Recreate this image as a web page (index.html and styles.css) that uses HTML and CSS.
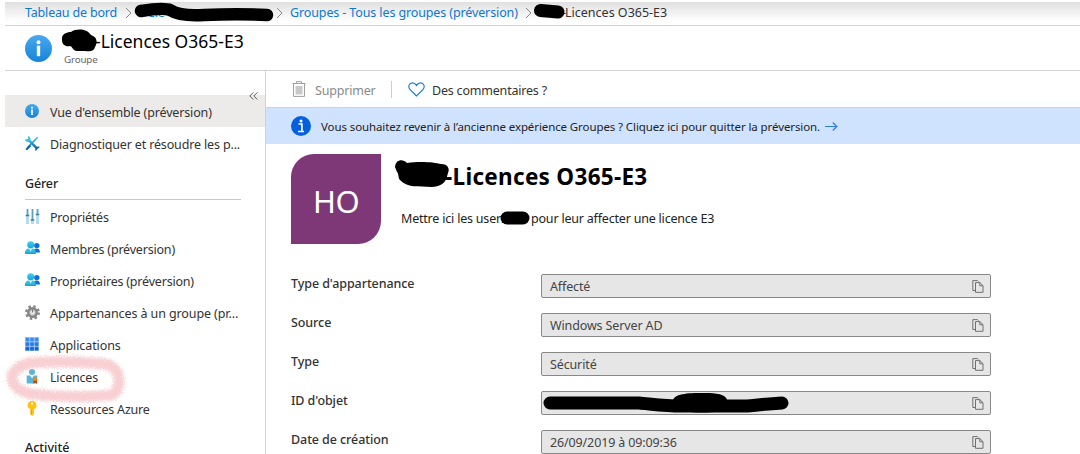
FILE: index.html
```html
<!DOCTYPE html>
<html lang="fr">
<head>
<meta charset="utf-8">
<title>Licences O365-E3</title>
<link rel="stylesheet" href="styles.css">
</head>
<body>
<svg class="defs" width="0" height="0">
  <defs>
    <linearGradient id="info" x1="0" y1="0" x2="0" y2="1"><stop offset="0" stop-color="#49a9ee"/><stop offset="1" stop-color="#1683da"/></linearGradient>
    <linearGradient id="person" x1="0" y1="0" x2="0" y2="1"><stop offset="0" stop-color="#3fd0ee"/><stop offset="1" stop-color="#1ba3d6"/></linearGradient>
    <linearGradient id="tile" x1="0" y1="0" x2="0" y2="1"><stop offset="0" stop-color="#4a93ef"/><stop offset="1" stop-color="#0f62d2"/></linearGradient>
    <linearGradient id="tool" x1="0" y1="0" x2="0" y2="1"><stop offset="0" stop-color="#2fc3ea"/><stop offset="1" stop-color="#0c64a8"/></linearGradient>
  </defs>
  <symbol id="i-info" viewBox="0 0 26 26"><circle cx="13" cy="13" r="13" fill="url(#info)"/><circle cx="13" cy="6.900" r="1.900" fill="#fff"/><path d="M11.400 10.200h3.200v10.200h-3.200z" fill="#fff"/></symbol>
  <symbol id="i-people" viewBox="0 0 16 14"><circle cx="11.800" cy="4.600" r="2.700" fill="#0f6fdc"/><path d="M8.800 11.500V9.800C9 8.300 10 7.500 11.600 7.500c2.200 0 3.300 1.200 3.400 4z" fill="#0f6fdc"/><circle cx="5.700" cy="3.800" r="3.500" fill="url(#person)"/><path d="M0 13v-1.800C.2 8.600 2 7.300 5.500 7.300s5.400 1.600 5.500 5.700z" fill="url(#person)"/><path d="M4.200 7.400h2.800l-1.400 3.400z" fill="#e3fbff"/></symbol>
  <symbol id="i-copy" viewBox="0 0 12 13"><path d="M3.300 10.500H.8V.6h4.700l1 1M3.500 2.600h4.400L11 5.700v6.600H3.500zM7.800 2.700v3.100H11" fill="none" stroke="#707070"/></symbol>
  <symbol id="i-chev" viewBox="0 0 7 12"><path d="M1 1l5 5-5 5" fill="none" stroke="#888"/></symbol>
</svg>

<div class="page">
  <nav class="crumbs">
    <a class="crumb c-home">Tableau de bord</a>
    <svg class="chev" width="7" height="12"><use href="#i-chev"/></svg>
    <a class="crumb c-org">Cle</a>
    <svg class="chev" width="7" height="12"><use href="#i-chev"/></svg>
    <a class="crumb c-groups">Groupes - Tous les groupes (préversion)</a>
    <svg class="chev" width="7" height="12"><use href="#i-chev"/></svg>
    <span class="crumb c-current"><span class="dash">-</span>Licences O365-E3</span>
  </nav>

  <header class="blade">
    <svg width="27" height="27"><use href="#i-info"/></svg>
    <div class="blade-text">
      <h1 class="blade-title">-Licences O365-E3</h1>
      <div class="blade-sub">Groupe</div>
    </div>
  </header>

  <div class="body">
    <aside class="side">
      <div class="collapse"><svg width="9" height="8" viewBox="0 0 9 8"><path d="M4.300.5L.8 4l3.500 3.500M8.300.5L4.800 4l3.500 3.500" fill="none" stroke="#555"/></svg></div>
      <a class="item active"><svg width="14" height="14"><use href="#i-info"/></svg><span class="l-over">Vue d'ensemble (préversion)</span></a>
      <a class="item"><svg width="15" height="15" viewBox="0 0 15 15"><path d="M12.700 1.300L3.500 10.500 1.200 13.700" stroke="url(#tool)" stroke-width="1.600" fill="none"/><path d="M2.600 3l9.600 9.600" stroke="url(#tool)" stroke-width="2.400"/><path d="M4.900 9L1.200 12.600l1.200 1.300L6.100 10.300z" fill="#0c68b0"/><path d="M3.200.7A3.300 3.300 0 0 1 4 5 3.300 3.300 0 0 1 .6 3.500" fill="none" stroke="#2fc3ea" stroke-width="1.800"/><path d="M14.300 11.500a2.600 2.600 0 0 0-3.300 3" fill="none" stroke="#17669f" stroke-width="1.700"/></svg><span class="l-diag">Diagnostiquer et résoudre les p...</span></a>
      <h2 class="section">Gérer</h2>
      <a class="item"><svg width="15" height="15" viewBox="0 0 15 15"><path d="M2.500 0v15M7.500 0v15M12.500 0v15" stroke="#b4dcec" stroke-width="3"/><path d="M2.500 0v6M7.500 0v11M12.500 0v5" stroke="#5f9fba"/><path d="M.7 6.500h3.600M5.700 11h3.600M10.700 5.500h3.600" stroke="#3e7c9a" stroke-width="1.300"/></svg><span>Propriétés</span></a>
      <a class="item"><svg width="16" height="14"><use href="#i-people"/></svg><span class="l-mem">Membres (préversion)</span></a>
      <a class="item"><svg width="16" height="14"><use href="#i-people"/></svg><span class="l-mem">Propriétaires (préversion)</span></a>
      <a class="item"><svg width="15" height="15" viewBox="0 0 15 15"><circle cx="7.500" cy="7.500" r="6.300" fill="none" stroke="#858585" stroke-width="2.200" stroke-dasharray="2.500 2.450"/><circle cx="7.500" cy="7.500" r="4.300" fill="#c4c4c4" stroke="#858585" stroke-width="2.400"/><circle cx="7.500" cy="7.500" r="2" fill="#eee"/><path d="M7.500 4.500v3" stroke="#777" stroke-width="1.200"/></svg><span class="l-app">Appartenances à un groupe (pr...</span></a>
      <a class="item"><svg width="14" height="14" viewBox="0 0 14 14"><path d="M.3.300h13.400v13.400H.3z" fill="url(#tile)"/><path d="M4.700 0v14M9.300 0v14M0 4.700h14M0 9.300h14" stroke="#b9d8fb" stroke-width=".8"/></svg><span class="l-apps">Applications</span></a>
      <a class="item"><svg width="14" height="15" viewBox="0 0 14 15"><circle cx="7" cy="3" r="3" fill="#59b4d9"/><path d="M1.700 6.500H5l2 2.500 2-2.500h3.300V14.500H1.700z" fill="#59b4d9"/><path d="M5.500 6.500h3L7 9z" fill="#fff"/><path d="M8.400 11H12v3.700l-1.800-1-1.800 1z" fill="#a84d1b"/><circle cx="10.200" cy="9.900" r="2.100" fill="#e88b1a"/></svg><span>Licences</span></a>
      <a class="item"><svg width="14" height="15" viewBox="0 0 14 15"><path fill-rule="evenodd" d="M7 0C10 0 11.500 2 11.500 4.300 11.500 6.200 10.500 7.500 8.900 8.200V13l-1.700 2L5.500 13.500V8.200C3.700 7.500 2.500 6.200 2.500 4.300 2.500 2 4.200 0 7 0zM7 1.500a1.100 1.100 0 1 0 .01 0z" fill="#ffc20e"/><path d="M6.200 8.500v5" stroke="#e79500"/></svg><span>Ressources Azure</span></a>
      <h2 class="section last">Activité</h2>
    </aside>

    <main class="main">
      <div class="toolbar">
        <svg width="14" height="16" viewBox="0 0 14 16"><path d="M.5 2.500h13M4.500 2V.6h5V2M1.500 3v12.400h11V3" fill="none" stroke="#a0a0a0"/><path d="M3.500 5h7v8.500h-7z" fill="#c8c8c8"/></svg>
        <span class="t-del">Supprimer</span>
        <i class="sep"></i>
        <svg width="17" height="15" viewBox="0 0 17 15"><path d="M8.500 14L1.900 7.400C-.3 4.700 1.100.8 4.400.8c1.800 0 3.100.9 4.100 2.600C9.500 1.700 10.800.8 12.600.8c3.300 0 4.700 3.900 2.500 6.600z" fill="none" stroke="#1882d8" stroke-width="1.200"/></svg>
        <span class="t-com">Des commentaires ?</span>
      </div>
      <div class="banner">
        <svg width="20" height="20" viewBox="0 0 20 20"><circle cx="10" cy="10" r="10" fill="#0560dd"/><circle cx="10" cy="5" r="1.500" fill="#fff"/><path d="M7.500 8h3.400v7M7 15.500h6" fill="none" stroke="#fff" stroke-width="1.700"/></svg>
        <span class="banner-text">Vous souhaitez revenir à l’ancienne expérience Groupes ? Cliquez ici pour quitter la préversion.</span>
        <svg width="13" height="9" viewBox="0 0 13 9"><path d="M0 4.500h12M7.800.5l4 4-4 4" fill="none" stroke="#2f7cf0" stroke-width="1.200"/></svg>
      </div>
      <section class="profile">
        <div class="avatar">HO</div>
        <div class="profile-text">
          <h2 class="name">-Licences O365-E3</h2>
          <p class="desc"><span class="d1">Mettre ici les users</span><span class="d2">pour leur affecter une licence E3</span></p>
        </div>
      </section>
      <dl class="props">
        <dt>Type d'appartenance</dt><dd><span>Affecté</span><svg width="12" height="13"><use href="#i-copy"/></svg></dd>
        <dt>Source</dt><dd><span>Windows Server AD</span><svg width="12" height="13"><use href="#i-copy"/></svg></dd>
        <dt>Type</dt><dd><span>Sécurité</span><svg width="12" height="13"><use href="#i-copy"/></svg></dd>
        <dt>ID d'objet</dt><dd><span></span><svg width="12" height="13"><use href="#i-copy"/></svg></dd>
        <dt>Date de création</dt><dd><span>26/09/2019 à 09:09:36</span><svg width="12" height="13"><use href="#i-copy"/></svg></dd>
      </dl>
    </main>
  </div>

  <svg class="marks" width="1080" height="454" viewBox="0 0 1080 454">
    <defs><filter id="chalk" x="-15%" y="-40%" width="130%" height="180%"><feTurbulence type="fractalNoise" baseFrequency=".9" numOctaves="2" seed="4" result="n"/><feGaussianBlur in="SourceGraphic" stdDeviation="1.500" result="b"/><feDisplacementMap in="b" in2="n" scale="7" xChannelSelector="R" yChannelSelector="G"/></filter></defs>
    <g fill="none" stroke="#000" stroke-linecap="round" stroke-linejoin="round">
      <path d="M140 11C152 9 164 8 169 10C177 15 188 16 203 15C225 14 247 14 266 15" stroke-width="12.500"/>
      <path d="M539.500 10.500L557 12" stroke-width="13"/>
      <path d="M506 218h16" stroke-width="13"/>
      <path d="M549 403H638C650 404 665 406 680 406H746C757 405 765 404 781 403" stroke-width="13"/>
    </g>
    <path d="M61 40C60 34 66 32 70 32C76 28 86 29 90 35C96 37 97 42 94 47C93 51 90 52 84 51H76C72 51 71 46 69 46C65 47 61 45 61 40z"/>
    <path d="M394 167C395 159 402 159 406 163C418 161 433 162 440 164C447 164 449 169 447 173C445 181 443 186 431 187C417 186 406 188 399 180C397 178 398 174 396 172z"/>
    <path d="M672 400C674 393 690 393 704 393C715 393 725 394 726 400V408C720 414 692 413 680 411z"/>
    <path class="ring" filter="url(#chalk)" d="M30 363C55 361 83 362 104 364C122 367 121 392 110 395C88 397 57 397 31 394C5 389 4 368 30 363z"/>
  </svg>
</div>
</body>
</html>
```
FILE: styles.css
```css
* { box-sizing: border-box; }
body { margin: 0; background: #fff; color: #333; font-family: "Noto Sans", sans-serif; font-size: 12.5px; overflow: hidden; }
h1, h2, p, dl, dd { margin: 0; }
svg { display: block; flex: none; }
.defs { position: absolute; }
.page { position: relative; height: 454px; padding: 2px 0 0 5px; overflow: hidden; white-space: nowrap; }

.crumbs { display: flex; align-items: center; height: 24px; padding: 0 0 2px 20px; background: linear-gradient(#e0e0e0, #fff 85%); border-bottom: 1px solid #d2d2d2; letter-spacing: -.18px; color: #0f78d0; }
.crumb { flex: none; line-height: 18px; }
.c-home { width: 100px; }
.c-org { width: 129px; margin-left: 15px; }
.c-groups { width: 235px; margin-left: 7px; letter-spacing: -.12px; }
.c-current { margin-left: 29px; color: #333; letter-spacing: 0; }
.dash { display: inline-block; transform: translateX(1px); }

.blade { display: flex; height: 45px; padding: 9px 0 0 20px; border-bottom: 1px solid #d2d2d2; }
.blade-text { padding-left: 12px; margin-top: -6px; }
.blade-title { margin-left: 31px; color: #000; font-size: 17.5px; font-weight: 400; line-height: 25px; letter-spacing: 0; }
.blade-sub { font-size: 9.8px; line-height: 12px; color: #666; letter-spacing: -.15px; }

.body { display: flex; height: 383px; }
.side { width: 261px; padding-top: 24px; border-right: 1px solid #d2d2d2; position: relative; }
.collapse { position: absolute; right: 7px; top: 21px; }
.item { display: flex; align-items: center; height: 32px; padding-left: 20px; letter-spacing: -.2px; color: #333; }
.item span { margin-left: auto; width: 215px; padding-top: 2px; }
.item .l-over, .item .l-diag { letter-spacing: -.15px; }
.item .l-mem { letter-spacing: -.2px; }
.item .l-app, .item .l-apps { letter-spacing: -.1px; }
.active { background: #edebe9; }
.section { width: 216px; height: 41px; margin-left: 20px; padding-top: 16px; font-size: 12.5px; line-height: 18px; font-weight: 500; color: #222; border-bottom: 1px solid #c8c8c8; letter-spacing: -.15px; }
.last { height: auto; padding-top: 15px; border: 0; letter-spacing: 0; }

.main { flex: 1; }
.toolbar { display: flex; align-items: center; height: 37px; padding-left: 26px; border-bottom: 1px solid #d2d2d2; }
.t-del { width: 76px; margin-left: 9px; color: #8a8a8a; padding-top: 2px; letter-spacing: -.2px; }
.sep { width: 1px; height: 17px; background: #ccc; margin-right: 16px; }
.t-com { margin-left: 7px; padding-top: 2px; letter-spacing: -.2px; }
.banner { display: flex; align-items: center; height: 36px; padding-left: 25px; background: #cfe3ff; font-size: 11.5px; letter-spacing: -.1px; color: #222; }
.banner-text { width: 504px; margin-left: 10px; padding-top: 1px; }
.profile { display: flex; padding: 10px 0 0 25px; }
.avatar { display: grid; place-items: center; width: 90px; height: 90px; background: #7e3878; border-radius: 23px 0 23px 0; color: #fff; font-size: 31px; padding-top: 4px; font-weight: 400; letter-spacing: -.5px; }
.profile-text { padding-left: 20px; }
.name { margin-left: 44px; height: 46px; color: #000; font-size: 22.5px; line-height: 45px; font-weight: 700; letter-spacing: .3px; }
.desc { display: flex; padding-top: 1px; line-height: 36px; letter-spacing: -.2px; color: #222; }
.d1 { width: 130px; }
.props { display: grid; grid-template-columns: 250px 450px; grid-auto-rows: 24px; row-gap: 15px; padding: 30px 0 0 25px; }
dt { line-height: 20px; font-weight: 500; letter-spacing: -.08px; }
dd { display: flex; align-items: center; justify-content: space-between; padding: 0 6px 0 8px; border: 1px solid #888; border-radius: 2px; background: #e6e6e6; color: #444; letter-spacing: -.13px; }
.marks { position: absolute; left: 1px; top: 0; pointer-events: none; }
.ring { fill: none; stroke: #f2a5ad; stroke-opacity: .52; stroke-width: 11px; }
```
